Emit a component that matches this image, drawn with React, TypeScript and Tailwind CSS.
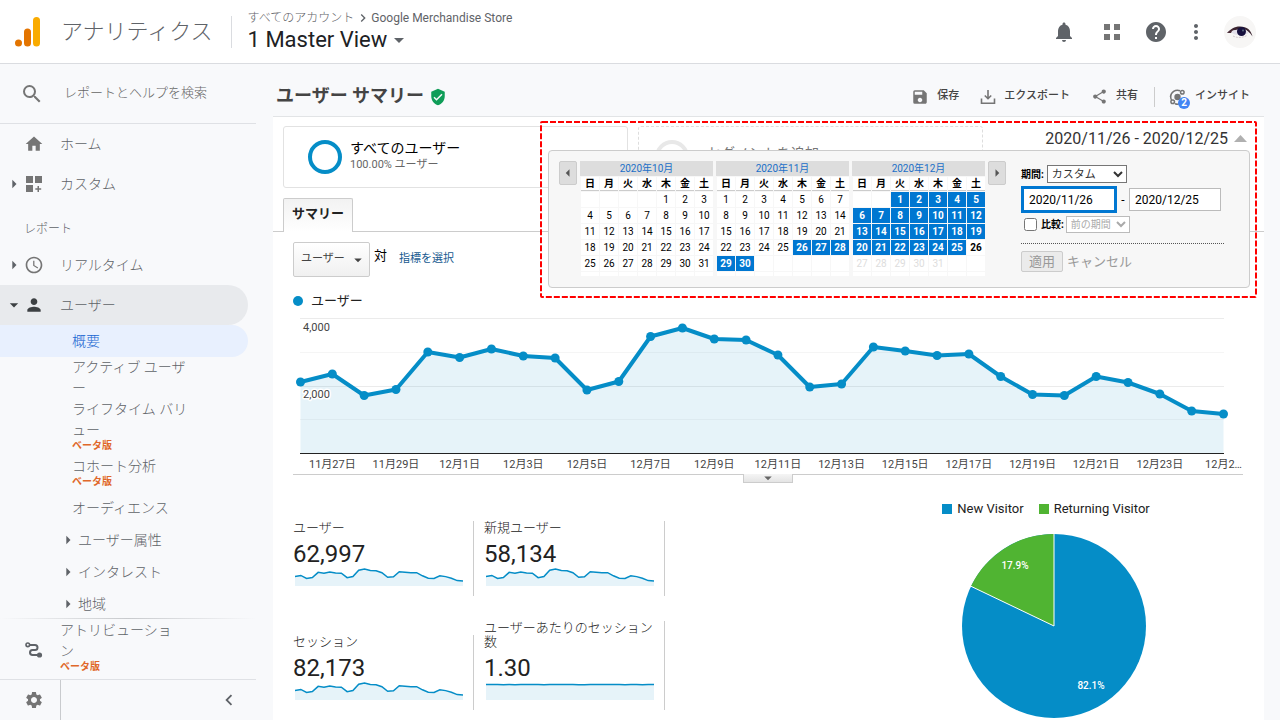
import type { ReactNode } from "react";
import {
  MdAccessTime,
  MdArrowDropDown,
  MdArrowLeft,
  MdArrowRight,
  MdChevronLeft,
  MdChevronRight,
  MdHelp,
  MdHome,
  MdMoreVert,
  MdNotifications,
  MdPerson,
  MdSave,
  MdSearch,
  MdSettings,
  MdShare,
  MdVerifiedUser,
} from "react-icons/md";

const USERS = [
  72, 64, 85.5, 79.5, 42, 47.5, 39, 46, 48, 80, 71.5, 26.5, 18, 29, 30, 45, 77, 74, 37, 41, 45.5,
  44, 66.5, 84.5, 85.5, 66.5, 72.5, 84, 101, 104,
];
const FLAT = USERS.map((_, i) => 21 + (i % 7 === 3 ? 1 : 0) + (i % 11 === 5 ? 1 : 0));
const AXIS = [
  "11月27日", "11月29日", "12月1日", "12月3日", "12月5日", "12月7日", "12月9日", "12月11日",
  "12月13日", "12月15日", "12月17日", "12月19日", "12月21日", "12月23日", "12月2…",
];
const WEEK = ["日", "月", "火", "水", "木", "金", "土"];

function Logo() {
  return (
    <svg width="26" height="30" viewBox="0 0 26 30" aria-hidden="true">
      <circle cx="3.5" cy="26" r="3.5" fill="#e37400" />
      <rect x="9" y="11.500" width="7" height="18" rx="3.500" fill="#e37400" />
      <rect x="18" y="0" width="7" height="29.500" rx="3.500" fill="#f9ab00" />
    </svg>
  );
}

function Eye() {
  return (
    <svg width="32" height="32" viewBox="0 0 32 32" aria-hidden="true">
      <circle cx="16" cy="16" r="16" fill="#f7f6f5" />
      <path d="M3 17C7 13 10 10.500 16 10.500c7 0 11 3.500 12.500 10C26 16.500 23 14 20 13L9 14.500Z" fill="#3b2430" />
      <path d="M7 16c3-3 12-4 18 .5C21 20 11 20.500 7 16Z" fill="#e4e0ea" />
      <circle cx="17.500" cy="15.500" r="4.500" fill="#16103d" />
      <circle cx="19" cy="14.500" r="1" fill="#5a6a80" />
      <path d="M3 17l6-4-2 4Z" fill="#4a2a35" />
      <path d="M9 20c4 2 9 2 14-.5" fill="none" stroke="#c9bdc2" strokeWidth=".8" strokeDasharray="2 1" />
    </svg>
  );
}

function CustomIcon() {
  return (
    <svg width="20" height="20" viewBox="0 0 20 20" fill="#757575" aria-hidden="true">
      <path d="M2 2h7v7H2zM11 2h7v7h-7zM2 11h7v7H2zM13.500 12h1.500v2.200h2.200v1.500H15v2.200h-1.500v-2.200h-2.200v-1.500h2.200z" />
    </svg>
  );
}

function RouteIcon() {
  return (
    <svg width="18" height="18" viewBox="0 0 18 18" fill="none" stroke="#5f6368" strokeWidth="2" aria-hidden="true">
      <circle cx="2.800" cy="3.800" r="1.800" strokeWidth="1.600" />
      <path d="M5 4h5a2.500 2.500 0 0 1 0 5H7.500a2.500 2.500 0 0 0 0 5H13" />
      <circle cx="14.500" cy="14" r="2.600" fill="#5f6368" stroke="none" />
    </svg>
  );
}

function ExportIcon() {
  return (
    <svg width="16" height="16" viewBox="0 0 16 16" fill="none" stroke="#757575" strokeWidth="1.600" aria-hidden="true">
      <path d="M8 1v8.500M4.800 6.500 8 9.700l3.200-3.200M1.500 9.500v4.700h13V9.500" />
    </svg>
  );
}

function InsightIcon() {
  return (
    <svg width="18" height="18" viewBox="0 0 18 18" fill="none" stroke="#757575" strokeWidth="1.500" aria-hidden="true">
      <circle cx="8.500" cy="9" r="3.200" fill="#757575" stroke="none" />
      <path d="M1.500 9a7 7 0 0 1 9.500-6.300M1.800 7.500A7 7 0 0 0 2.500 12M6 15.700a7 7 0 0 0 9.500-6.500" />
      <circle cx="13.300" cy="4.300" r="1.800" />
      <circle cx="3.700" cy="13.700" r="1.800" />
    </svg>
  );
}

function Beta() {
  return <span className="block text-[10px] leading-[9px] font-bold text-[#e0682a]">ベータ版</span>;
}

function NavRow({ icon, label, arrow, active }: { icon: ReactNode; label: string; arrow?: ReactNode; active?: boolean }) {
  return (
    <a
      href="#"
      className={
        active
          ? "mr-2 flex h-10 items-center rounded-r-full bg-[#e8eaed] text-[#3c4043]"
          : "mr-2 flex h-10 items-center text-[#5f6368]"
      }
    >
      <span className="flex w-6 justify-end">{arrow}</span>
      <span className="flex w-9">{icon}</span>
      <span className="text-[#5f6368]">{label}</span>
    </a>
  );
}

function Sidebar() {
  return (
    <aside className="flex w-64 shrink-0 flex-col text-sm font-light text-[#5f6368]">
      <label className="flex h-15 shrink-0 items-center border-b border-[#dfe1e5] pl-5">
        <MdSearch size={24} color="#757575" />
        <input
          type="text"
          aria-label="レポートとヘルプを検索"
          placeholder="レポートとヘルプを検索"
          className="ml-5 w-44 bg-transparent text-[13px] outline-none placeholder:text-[#666]"
        />
      </label>
      <nav className="min-h-0 flex-1 overflow-hidden">
        <NavRow icon={<MdHome size={20} color="#757575" />} label="ホーム" />
        <NavRow icon={<CustomIcon />} label="カスタム" arrow={<MdArrowRight size={20} />} />
        <p className="flex h-[41px] items-center pt-2 pl-6 text-xs">レポート</p>
        <NavRow icon={<MdAccessTime size={20} color="#757575" />} label="リアルタイム" arrow={<MdArrowRight size={20} />} />
        <NavRow icon={<MdPerson size={20} color="#3c4043" />} label="ユーザー" arrow={<MdArrowDropDown size={20} />} active />
        <ul>
          <li>
            <a href="#" className="mr-2 flex h-8 items-center rounded-r-full bg-[#e8f0fe] pl-18 text-[#1967d2]">概要</a>
          </li>
          <li className="pr-16 pl-18 leading-[21px] break-all">
            <a href="#">アクティブ ユーザー</a>
          </li>
          <li className="pr-16 pl-18 leading-[21px] break-all">
            <a href="#">ライフタイム バリュー<Beta /></a>
          </li>
          <li className="py-[6px] pl-18 leading-[21px]">
            <a href="#">コホート分析<Beta /></a>
          </li>
          <li>
            <a href="#" className="flex h-8 items-center pl-18">オーディエンス</a>
          </li>
          {["ユーザー属性", "インタレスト", "地域"].map((t) => (
            <li key={t}>
              <a href="#" className="flex h-8 items-center pl-[58px]">
                <MdArrowRight size={20} />
                {t}
              </a>
            </li>
          ))}
        </ul>
      </nav>
      <div className="-mt-px h-px shrink-0 bg-linear-to-r from-transparent via-[#c8cacd] to-transparent" />
      <a href="#" className="flex shrink-0 items-center pt-px pb-2 leading-[21px]">
        <span className="flex w-[60px] pt-2 pl-[25px]">
          <RouteIcon />
        </span>
        <span className="w-[118px] break-all">アトリビューション<Beta /></span>
      </a>
      <div className="flex h-[41px] shrink-0 border-t border-[#dfe1e5]">
        <button type="button" aria-label="管理" className="flex w-[61px] items-center border-r border-[#c9cbce] pl-6">
          <MdSettings size={20} color="#757575" />
        </button>
        <button type="button" aria-label="折りたたむ" className="flex flex-1 items-center justify-end pr-4">
          <MdChevronLeft size={22} color="#5f6368" />
        </button>
      </div>
    </aside>
  );
}

function TopBar() {
  return (
    <header className="flex h-16 shrink-0 items-center border-b border-[#dadce0] bg-white pr-6 pl-[15px] text-[#5f6368]">
      <Logo />
      <span className="ml-5 text-[22px] font-light">アナリティクス</span>
      <div className="ml-[18px] h-8 border-l border-[#dadce0]" />
      <div className="ml-4">
        <div className="flex h-4 items-center text-xs">
          <span className="font-light">すべてのアカウント</span>
          <MdChevronRight size={16} className="ml-px" />
          Google Merchandise Store
        </div>
        <button type="button" className="flex h-7 items-center text-[22px] text-[#202124]">
          1 Master View
          <MdArrowDropDown size={24} color="#5f6368" />
        </button>
      </div>
      <div className="ml-auto flex items-center">
        <button type="button" aria-label="通知"><MdNotifications size={24} /></button>
        <button type="button" aria-label="アプリ" className="ml-7">
          <svg width="16" height="16" viewBox="0 0 16 16" fill="#757575" aria-hidden="true">
            <path d="M0 0h6v6H0zM10 0h6v6h-6zM0 10h6v6H0zM10 10h6v6h-6z" />
          </svg>
        </button>
        <button type="button" aria-label="ヘルプ" className="ml-6"><MdHelp size={24} /></button>
        <button type="button" aria-label="その他" className="ml-4"><MdMoreVert size={24} /></button>
        <button type="button" aria-label="アカウント" className="ml-4"><Eye /></button>
      </div>
    </header>
  );
}

function Month({ title, lead, days, from, to, disabledFrom }: { title: string; lead: number; days: number; from: number; to: number; disabledFrom: number }) {
  const rows = [0, 1, 2, 3, 4].map((r) => WEEK.map((_, c) => r * 7 + c - lead + 1));
  return (
    <table className="border-separate border-spacing-px text-center text-[10px]">
      <caption className="mr-px h-[15px] bg-[#ddd] text-[10px] leading-[15px] text-[#1b6fc8]">{title}</caption>
      <thead>
        <tr>
          {WEEK.map((d) => (
            <th key={d} scope="col" className="h-[14px] w-[18px] border-b border-[#ccc] bg-white p-0 leading-[13px]">{d}</th>
          ))}
        </tr>
      </thead>
      <tbody>
        {rows.map((row, r) => (
          <tr key={r}>
            {row.map((d, c) => {
              const valid = d >= 1 && d <= days;
              const style = !valid
                ? "h-[15px] bg-white p-0"
                : d >= from && d <= to
                  ? "h-[15px] bg-[#0077d1] p-0 leading-[15px] font-bold text-white"
                  : d >= disabledFrom
                    ? "h-[15px] bg-white p-0 leading-[15px] text-[#ddd]"
                    : disabledFrom === 27 && d === 26
                      ? "h-[15px] bg-white p-0 leading-[15px] font-bold"
                      : "h-[15px] bg-white p-0 leading-[15px]";
              return <td key={c} className={style}>{valid ? d : ""}</td>;
            })}
          </tr>
        ))}
        <tr>
          {WEEK.map((d) => (
            <td key={d} className="h-1 bg-white p-0" />
          ))}
        </tr>
      </tbody>
    </table>
  );
}

function DatePicker() {
  return (
    <div className="absolute top-1 right-[7px] h-[177px] w-[717px] text-black">
      <svg className="pointer-events-none absolute inset-0 h-full w-full" aria-hidden="true">
        <rect x="1" y="1" width="715" height="175" rx="1" fill="none" stroke="#f00" strokeWidth="2" strokeDasharray="6 2" />
      </svg>
      <div className="flex h-[29px] items-end justify-end pr-[10px]">
        <button type="button" className="flex h-[23px] items-center gap-[6px] text-base text-[#333]">
          2020/11/26 - 2020/12/25
          <svg width="13" height="7" viewBox="0 0 13 7" fill="#b0b0b0" aria-hidden="true">
            <path d="M6.500 0 13 7H0z" />
          </svg>
        </button>
      </div>
      <div className="mr-[7px] ml-2 flex h-[138px] items-start rounded-[4px] border border-[#ccc] bg-[#f7f7f7] pt-[10px] pl-[10px]">
        <button type="button" aria-label="前の月" className="mr-[3px] flex h-6 w-[18px] items-center justify-center rounded-xs border border-[#ccc] bg-[#ddd]">
          <MdArrowLeft size={18} color="#555" className="shrink-0" />
        </button>
        <div className="flex items-start gap-[2px]">
          <Month title="2020年10月" lead={4} days={31} from={99} to={99} disabledFrom={99} />
          <Month title="2020年11月" lead={0} days={30} from={26} to={30} disabledFrom={99} />
          <Month title="2020年12月" lead={2} days={31} from={1} to={25} disabledFrom={27} />
        </div>
        <button type="button" aria-label="次の月" className="ml-[2px] flex h-6 w-[18px] items-center justify-center rounded-xs border border-[#ccc] bg-[#ddd]">
          <MdArrowRight size={18} color="#555" className="shrink-0" />
        </button>
        <form className="ml-[15px] pt-1 text-[10px]">
          <div className="flex items-center gap-[3px]">
            <label htmlFor="range" className="font-bold">期間:</label>
            <select id="range" className="h-[18px] w-[80px] border border-[#767676] bg-white text-[11px] leading-4 text-[#333]">
              <option>カスタム</option>
            </select>
          </div>
          <div className="mt-[3px] flex items-center">
            <input aria-label="開始日" defaultValue="2020/11/26" className="h-[27px] w-[96px] border-3 border-[#0077d1] bg-white px-[5px] text-xs outline-none" />
            <span className="w-3 text-center text-xs">-</span>
            <input aria-label="終了日" defaultValue="2020/12/25" className="h-[23px] w-[92px] border border-[#bbb] bg-white px-[5px] text-xs outline-none" />
          </div>
          <div className="mt-[3px] flex items-center">
            <input id="compare" type="checkbox" className="ml-[3px] h-[13px] w-[13px]" />
            <label htmlFor="compare" className="ml-1 font-bold">比較:</label>
            <select aria-label="比較期間" disabled className="ml-[2px] h-[17px] w-[64px] border border-[#bbb] bg-white text-[10px] leading-[15px] text-[#aaa]">
              <option>前の期間</option>
            </select>
          </div>
          <div className="mt-[10px] w-[203px] border-t border-dotted border-[#555]" />
          <div className="mt-[7px] flex items-center gap-1 text-[13px] text-[#999]">
            <button type="button" disabled className="flex h-[21px] w-[42px] items-center justify-center rounded-xs border border-[#ccc] bg-[#ebebeb]">適用</button>
            <button type="button">キャンセル</button>
          </div>
        </form>
      </div>
    </div>
  );
}

function UsersChart() {
  const px = (i: number) => 7.5 + (i * 923) / 29;
  const line = USERS.map((y, i) => `${px(i)},${y}`).join(" ");
  return (
    <svg viewBox="0 0 950 164" className="block h-auto w-full overflow-visible" role="img" aria-label="ユーザー">
      <g strokeWidth="1">
        <path d="M7 8.500H931M7 76.500H931" stroke="#ebebeb" />
        <path d="M7 42.500H931M7 109.500H931" stroke="#f5f5f5" />
      </g>
      <polygon points={`7.5,143 ${line} 930.5,143`} fill="#058dc7" fillOpacity=".1" />
      <g fontSize="11" fill="#444" stroke="#fff" strokeWidth="3" paintOrder="stroke" strokeLinejoin="round">
        <text x="10" y="21">4,000</text>
        <text x="10" y="88">2,000</text>
      </g>
      <path d="M7 143.500H931" stroke="#222" />
      <polyline points={line} fill="none" stroke="#058dc7" strokeWidth="4" strokeLinejoin="round" />
      {USERS.map((y, i) => (
        <circle key={i} cx={px(i)} cy={y} r="4.500" fill="#058dc7" />
      ))}
      <g fontSize="11" fill="#444" textAnchor="middle">
        {AXIS.map((t, i) => (
          <text key={t} x={i === 14 ? 930.5 : px(i * 2 + 1)} y="158">{t}</text>
        ))}
      </g>
    </svg>
  );
}

function Metric({ label, value, flat }: { label: string; value: string; flat?: boolean }) {
  const ys = flat ? FLAT : USERS;
  const pts = ys.map((y, i) => `${(i * 168) / 29 + 2},${(flat ? 0.5 : 0) + (y - 18) * (flat ? 0.3 : 0.14) + 1}`).join(" ");
  return (
    <div className="w-[181px] border-r border-[#ccc] pb-2">
      <div className="pr-2 text-[13px] leading-[14px] font-light text-[#222]">{label}</div>
      <div className="mt-[5px] text-2xl leading-7 text-[#222]">{value}</div>
      <svg width="172" height="20" viewBox="0 0 172 20" className="block" aria-hidden="true">
        <polygon points={`2,18 ${pts} 170,18`} fill="#058dc7" fillOpacity=".1" />
        <polyline points={pts} fill="none" stroke="#058dc7" strokeWidth="1.500" />
      </svg>
    </div>
  );
}

function Report() {
  return (
    <section className="relative flex-1 border-t border-[#e2e4e6] bg-white pt-[9px]">
      <div className="flex gap-[10px] px-[10px]">
        <button type="button" className="flex h-[62px] w-[345px] items-center rounded-[3px] border border-[#e2e2e2] pl-6 text-left">
          <span className="h-[34px] w-[34px] rounded-full border-4 border-[#058dc7]" />
          <span className="ml-2 pb-px">
            <span className="block text-sm leading-[17px] text-black">すべてのユーザー</span>
            <span className="block text-[11px] leading-4 text-[#666]">100.00% ユーザー</span>
          </span>
        </button>
        <button type="button" className="flex h-[62px] w-[345px] items-center rounded-[3px] border border-dashed border-[#ddd] pl-4 text-left">
          <span className="h-[34px] w-[34px] rounded-full border-4 border-[#e8e8e8]" />
          <span className="ml-[18px] pb-2 text-sm text-[#777]">セグメントを追加</span>
        </button>
      </div>
      <div className="mt-[10px] flex h-[34px] border-b border-[#ccc] pl-[10px]">
        <button type="button" className="relative -mb-px h-[34px] w-[70px] rounded-t-xs border border-b-0 border-[#ccc] bg-linear-to-b from-[#f2f2f2] to-white pb-[3px] text-[13px] font-bold text-[#222]">
          サマリー
        </button>
      </div>
      <div className="pr-[21px] pl-5">
        <div className="mt-[10px] flex h-[35px] items-center">
          <button type="button" className="flex h-[35px] w-[77px] items-center rounded-xs border border-[#ccc] bg-linear-to-b from-white to-[#f0f0f0] pl-[7px] text-[11px] text-[#444]">
            ユーザー
            <MdArrowDropDown size={18} className="ml-1" />
          </button>
          <span className="ml-1 pb-2 text-[13px] text-black">対</span>
          <a href="#" className="ml-3 text-[11px] text-[#15588f]">指標を選択</a>
        </div>
        <div className="mt-[14px] flex h-[19px] items-center text-[13px] text-[#222]">
          <span className="mr-2 h-[10px] w-[10px] rounded-full bg-[#058dc7]" />
          ユーザー
        </div>
        <UsersChart />
        <div className="border-t border-[#ccc]">
          <button type="button" aria-label="グラフを開閉" className="mx-auto -mt-px flex h-[9px] w-[50px] items-center justify-center overflow-hidden border border-t-0 border-[#ccc] bg-linear-to-b from-[#f5f5f5] to-[#e4e4e4]">
            <MdArrowDropDown size={18} color="#666" className="shrink-0" />
          </button>
        </div>
        <div className="mt-[18px] flex items-start justify-between">
          <div className="mt-5 grid grid-cols-[191px_191px] items-end gap-y-[25px]">
            <Metric label="ユーザー" value="62,997" />
            <Metric label="新規ユーザー" value="58,134" />
            <Metric label="セッション" value="82,173" />
            <Metric label="ユーザーあたりのセッション数" value="1.30" flat />
          </div>
          <div className="flex w-[378px] flex-col items-center">
            <div className="flex h-4 items-center pr-4 text-[13px] text-[#222]">
              <span className="mr-[5px] h-[10px] w-[10px] bg-[#058dc7]" />
              New Visitor
              <span className="mr-[5px] ml-[15px] h-[10px] w-[10px] bg-[#50b432]" />
              Returning Visitor
            </div>
            <svg width="184" height="184" viewBox="-92 -92 184 184" className="mt-[17px]" role="img" aria-label="New Visitor 82.1%, Returning Visitor 17.9%">
              <circle r="92" fill="#058dc7" />
              <path d="M0 0L-83 -39.700A92 92 0 0 1 0 -92Z" fill="#50b432" />
              <path d="M-83 -39.700L0 0V-92" fill="none" stroke="#fff" />
              <g fontSize="10" fontWeight="500" fill="#fff" textAnchor="middle">
                <text x="-39" y="-57">17.9%</text>
                <text x="37" y="63">82.1%</text>
              </g>
            </svg>
          </div>
        </div>
      </div>
      <DatePicker />
    </section>
  );
}

export default function App() {
  return (
    <div lang="ja" className="flex h-screen flex-col overflow-hidden bg-[#f8f9fb] font-['Roboto','Noto_Sans_CJK_JP',sans-serif]">
      <TopBar />
      <div className="flex min-h-0 flex-1">
        <Sidebar />
        <main className="flex min-w-0 flex-1 flex-col pr-4 pl-[17px]">
          <div className="flex h-[52px] shrink-0 items-center pt-[13px] pr-[14px] pl-[3px]">
            <h1 className="pb-px text-lg font-bold text-[#444]">ユーザー サマリー</h1>
            <MdVerifiedUser size={18} color="#0f9d58" className="ml-[5px]" />
            <div className="ml-auto flex items-center text-[11px] font-medium text-[#444]">
              <button type="button" className="flex items-center gap-2"><MdSave size={18} color="#757575" />保存</button>
              <button type="button" className="ml-[21px] flex items-center gap-2"><ExportIcon />エクスポート</button>
              <button type="button" className="ml-[21px] flex items-center gap-2"><MdShare size={17} color="#757575" />共有</button>
              <div className="mr-[14px] ml-4 h-5 border-l border-[#ccc]" />
              <button type="button" className="relative flex items-center gap-2">
                <InsightIcon />インサイト
                <span className="absolute top-[9px] left-[9px] h-3 w-3 rounded-full bg-[#4285f4] text-center text-[10px] leading-3 font-bold text-white">2</span>
              </button>
            </div>
          </div>
          <Report />
        </main>
      </div>
    </div>
  );
}
